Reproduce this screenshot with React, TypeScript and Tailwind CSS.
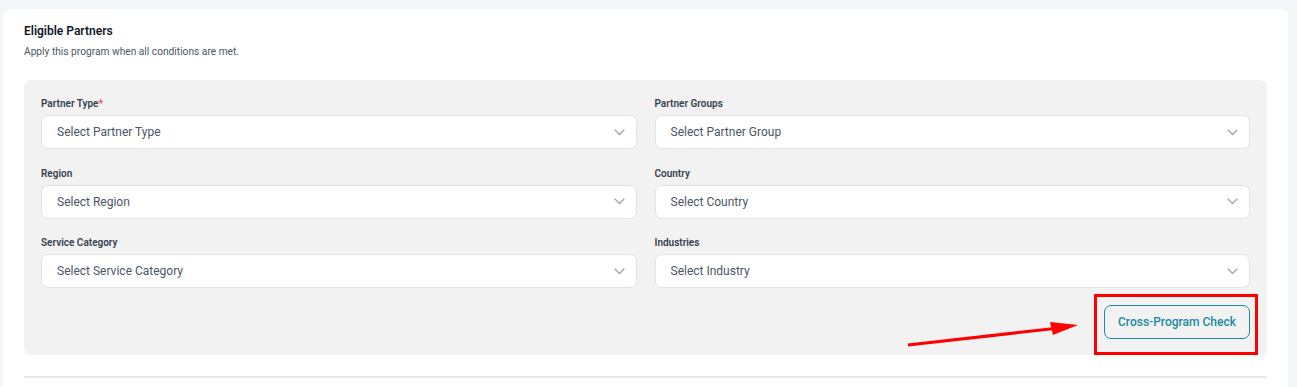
import React from "react";

const fields: { label: string; placeholder: string; required?: boolean }[] = [
  { label: "Partner Type", placeholder: "Select Partner Type", required: true },
  { label: "Partner Groups", placeholder: "Select Partner Group" },
  { label: "Region", placeholder: "Select Region" },
  { label: "Country", placeholder: "Select Country" },
  { label: "Service Category", placeholder: "Select Service Category" },
  { label: "Industries", placeholder: "Select Industry" },
];

function Chevron() {
  return (
    <svg width="11" height="7" viewBox="0 0 11 7" fill="none">
      <path d="M1 1l4.5 4.5L10 1" stroke="#a3a3a3" strokeWidth="1.3" strokeLinecap="round" strokeLinejoin="round" />
    </svg>
  );
}

export default function App() {
  return (
    <div className="w-[1297px] h-[387px] overflow-hidden bg-[#f5f6f8] pt-[9px] pl-[3px]" style={{ fontFamily: "Roboto, 'Liberation Sans', sans-serif" }}>
      <div className="w-[1285px] h-[400px] bg-white rounded-[8px] pt-[14px] px-[21px]">
        <h2 className="text-[12px] leading-[16px] font-semibold text-[#111827]">Eligible Partners</h2>
        <p className="mt-[6px] text-[10.2px] leading-[14px] text-[#4b5563]">Apply this program when all conditions are met.</p>
        <div className="relative mt-[21px] bg-[#f2f2f2] rounded-[7px] pt-[17px] pb-[16px] px-[17px]">
          <div className="grid grid-cols-2 gap-x-[18px] gap-y-[17.5px]">
            {fields.map((f) => (
              <div key={f.label} className="flex flex-col gap-[4px]">
                <label className="text-[10px] leading-[14px] font-semibold text-[#374151]">
                  {f.label}
                  {f.required && <span className="text-[#ef4444]">*</span>}
                </label>
                <div className="h-[34px] bg-white border border-[#e3e3e3] rounded-[7px] flex items-center justify-between pl-[15px] pr-[11px]">
                  <span className="text-[12px] text-[#4b5567]">{f.placeholder}</span>
                  <Chevron />
                </div>
              </div>
            ))}
          </div>
          <div className="flex justify-end mt-[17px]">
            <div className="relative">
              <button className="w-[146px] h-[34px] rounded-[7px] border border-[#1a8aa0] bg-transparent text-[12px] font-medium text-[#1a8aa0]">
                Cross-Program Check
              </button>
              <div className="absolute left-[-10px] right-[-8px] top-[-11px] bottom-[-16px] border-[3px] border-[#ff0000] pointer-events-none" />
            </div>
          </div>
          <svg className="absolute left-[880px] top-[240px]" width="200" height="30" viewBox="0 0 200 30">
            <line x1="4" y1="25" x2="155" y2="8" stroke="#ff0000" strokeWidth="3" />
            <polygon points="146,2 174,5 149,15" fill="#ff0000" />
          </svg>
        </div>
        <div className="mt-[21px] h-[2px] bg-[#e8e8e8]" />
      </div>
    </div>
  );
}
